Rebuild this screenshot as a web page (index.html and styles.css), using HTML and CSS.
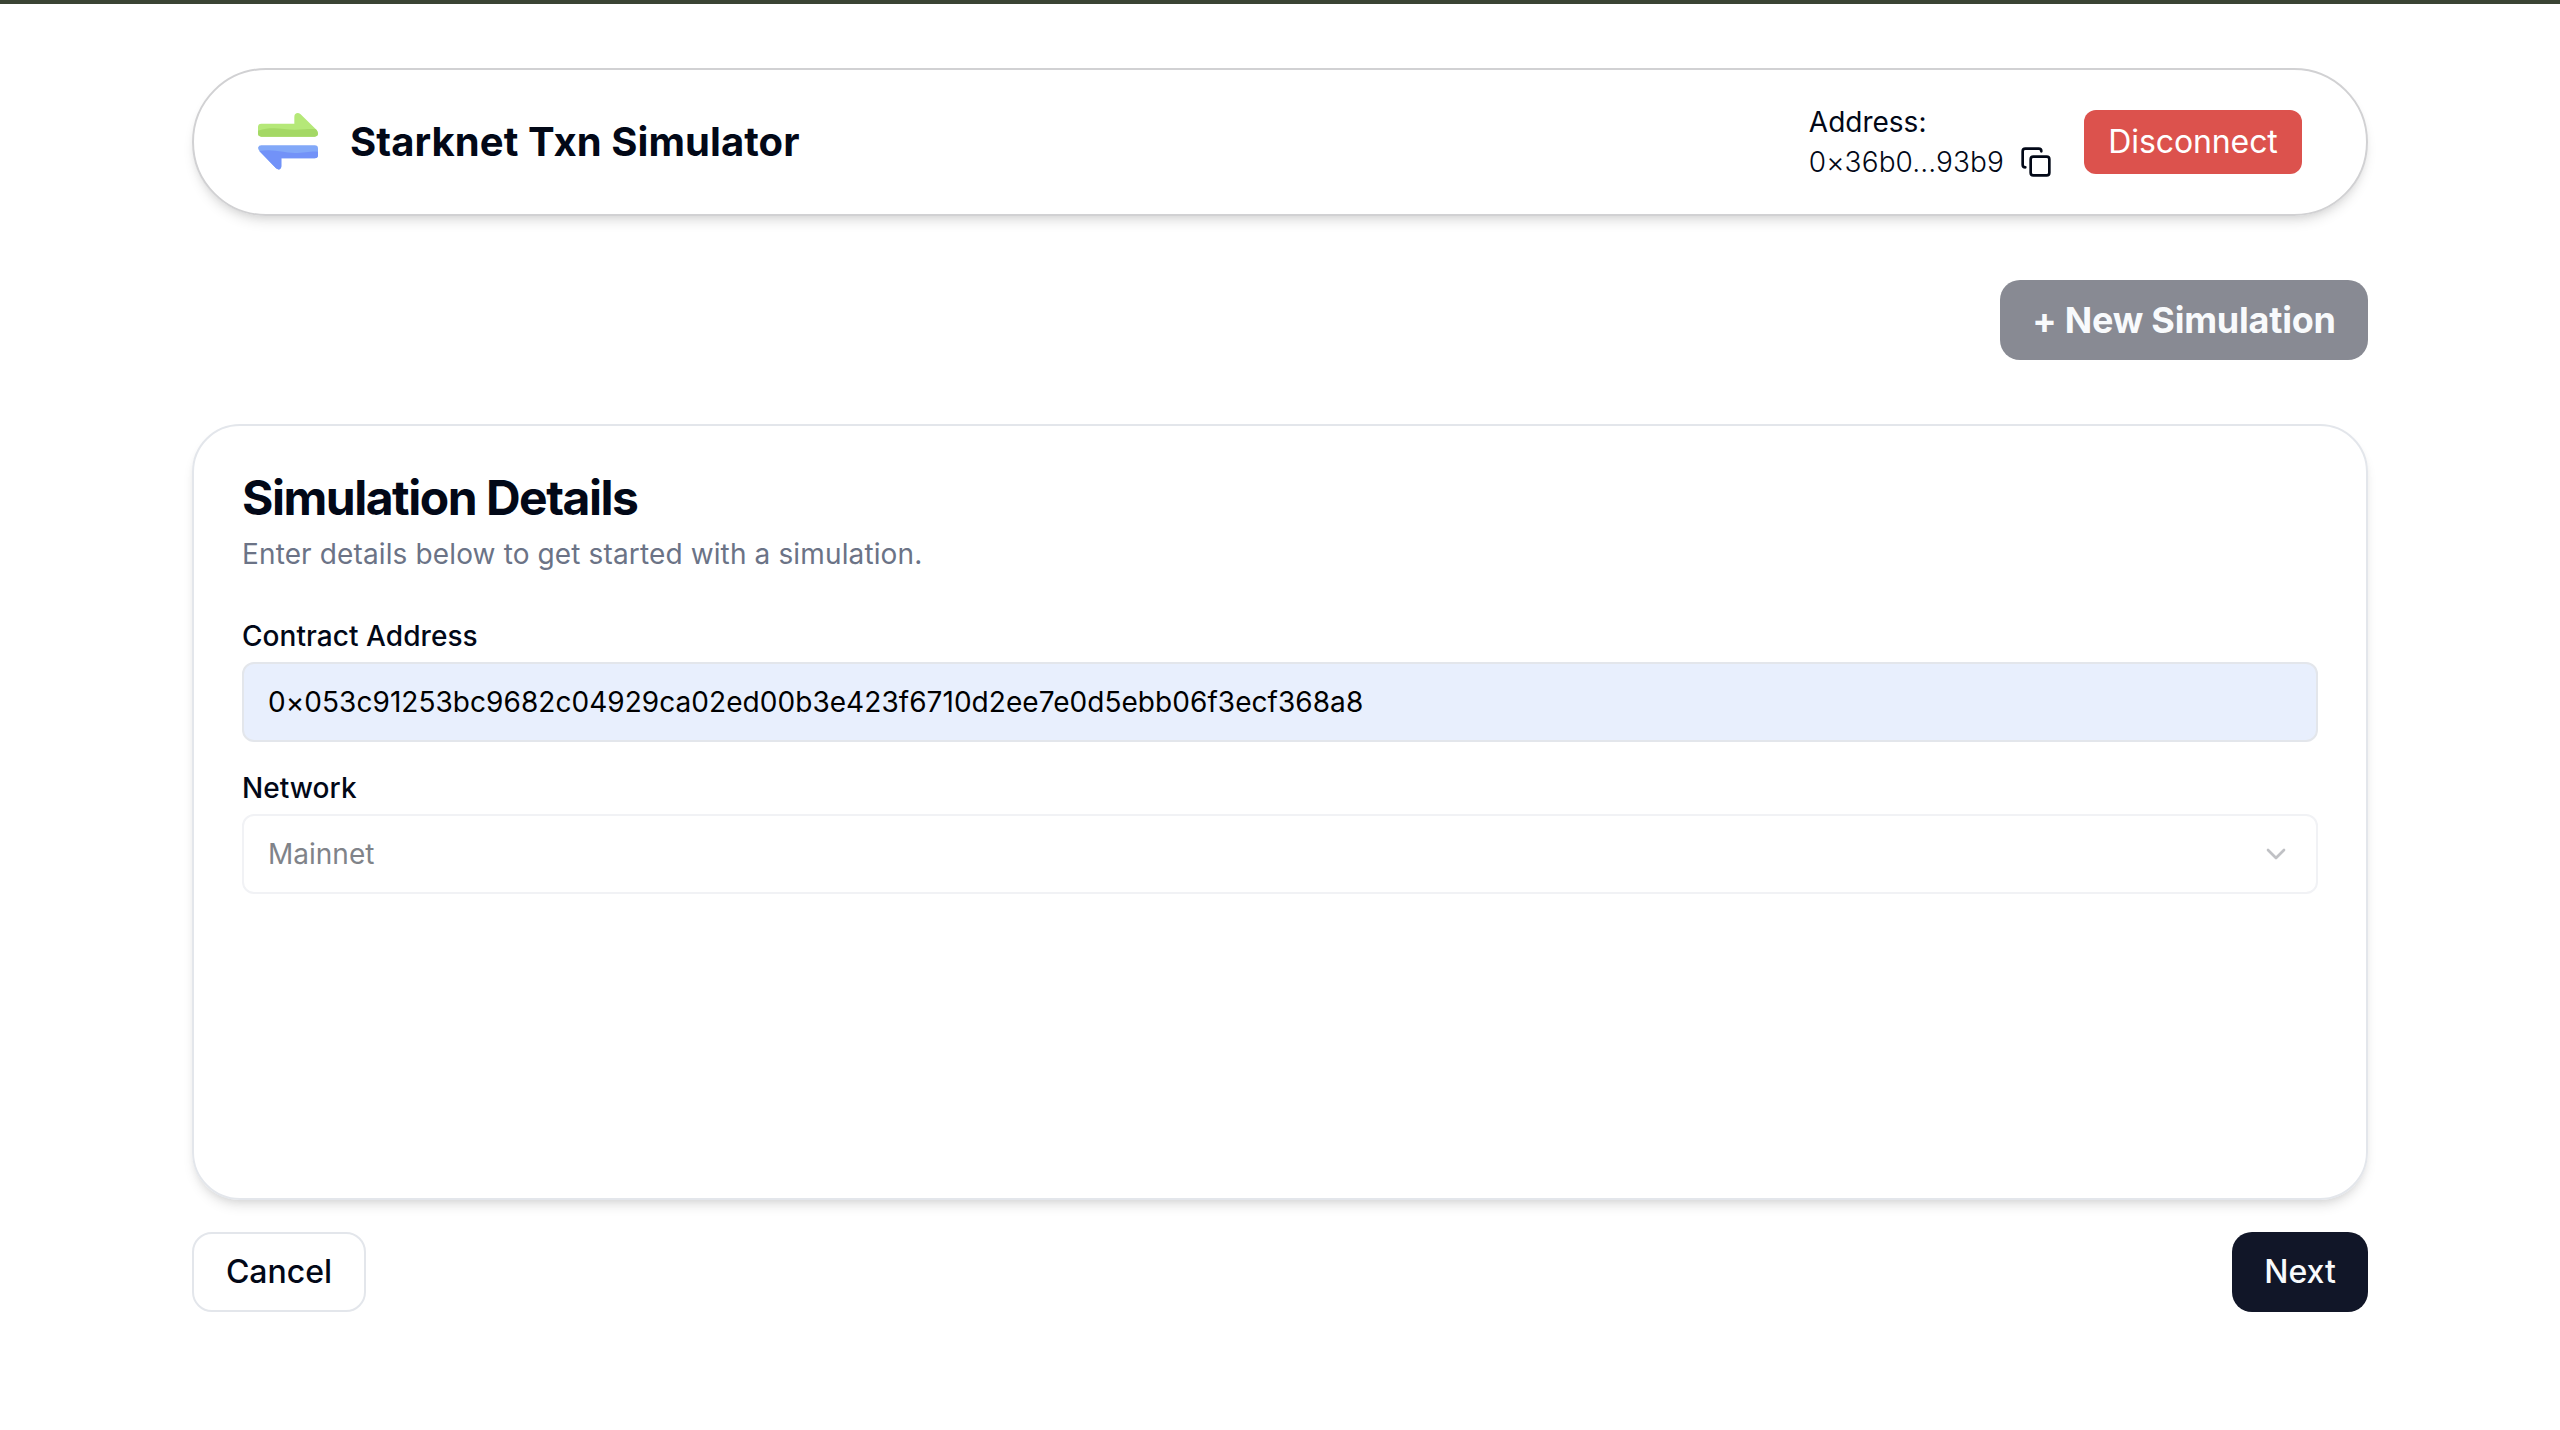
FILE: index.html
```html
<!DOCTYPE html>
<html lang="en">
<head>
<meta charset="utf-8">
<title>Starknet Txn Simulator</title>
<link rel="stylesheet" href="styles.css">
</head>
<body>
<div class="page">
  <header class="header">
    <div class="brand">
      <svg class="logo" viewBox="0 0 180 174">
        <path fill="#b5e878" d="M10 32H109V11C109 1 119-3 127 3L173 48Q180 55 180 61Q180 71 170 71H10Q0 71 0 61V42Q0 32 10 32Z"/>
        <path fill="#a4d865" d="M0 53C45 38 75 50 110 50C140 50 158 46 174 49Q180 56 180 61Q180 71 170 71H10Q0 71 0 61Z"/>
        <path fill="#82a8f8" d="M10 97H170Q180 97 180 107V126Q180 136 170 136H70V160C70 170 61 172 54 166L6 116Q0 109 0 104Q2 97 10 97Z"/>
        <path fill="#7292f8" d="M4 114C45 107 75 119 110 120C140 120 158 114 180 116V126Q180 136 170 136H70V160C70 170 61 172 54 166Z"/>
      </svg>
      <h1 class="brand-name">Starknet Txn Simulator</h1>
    </div>
    <div class="account">
      <div class="address">
        <span class="address-label">Address:</span>
        <div class="address-row">
          <span class="address-value">0×36b0...93b9</span>
          <svg class="copy" viewBox="0 0 24 24"><rect x="8" y="8" width="14" height="14" rx="2"/><path d="M4 16c-1.1 0-2-.9-2-2V4c0-1.1.9-2 2-2h10c1.1 0 2 .9 2 2"/></svg>
        </div>
      </div>
      <button class="disconnect">Disconnect</button>
    </div>
  </header>
  <div class="toolbar"><button class="btn new">+ New Simulation</button></div>
  <main class="card">
    <h2 class="title">Simulation Details</h2>
    <p class="subtitle">Enter details below to get started with a simulation.</p>
    <label class="label" for="contract">Contract Address</label>
    <input class="field input" id="contract" value="0×053c91253bc9682c04929ca02ed00b3e423f6710d2ee7e0d5ebb06f3ecf368a8">
    <span class="label">Network</span>
    <div class="field select">
      <span>Mainnet</span>
      <svg class="chevron" viewBox="0 0 24 24"><path d="m6 9 6 6 6-6"/></svg>
    </div>
  </main>
  <footer class="actions">
    <button class="btn cancel">Cancel</button>
    <button class="btn next">Next</button>
  </footer>
</div>
</body>
</html>
```
FILE: styles.css
```css
* { box-sizing: border-box; margin: 0; }
body {
  min-height: 1430px;
  background: #fff;
  border-top: 4px solid #3a4434;
  color: #020817;
  font-family: Inter, sans-serif;
  font-size: 28px;
  line-height: 40px;
}
button, input { font: inherit; }
button { border: 0; padding: 0; }
.page { width: 2176px; margin: 0 auto; padding-top: 64px; }
.header {
  height: 148px;
  padding: 0 64px 0 62px;
  display: flex;
  align-items: center;
  justify-content: space-between;
  border: 2px solid #d1d1d3;
  border-radius: 74px;
  box-shadow: 0 8px 12px -2px rgb(0 0 0 / .1), 0 4px 8px -4px rgb(0 0 0 / .1);
}
.brand { display: flex; align-items: center; gap: 32px; padding-left: 2px; }
.logo { width: 60px; height: 58px; overflow: visible; }
.brand-name { font-size: 40px; line-height: 56px; font-weight: 700; letter-spacing: 0.08px; }
.account { display: flex; align-items: center; gap: 32px; }
.address { display: flex; flex-direction: column; }
.address-row { display: flex; align-items: center; gap: 16px; }
.address-value { font-weight: 300; letter-spacing: 0.1px; }
.copy { width: 32px; height: 32px; }
.copy, .chevron { fill: none; stroke: currentColor; stroke-width: 2; stroke-linecap: round; stroke-linejoin: round; }
.disconnect {
  width: 218px;
  height: 64px;
  border-radius: 12px;
  background: #dc524d;
  color: #fff;
  font-size: 32px;
  letter-spacing: -0.1px;
}
.toolbar { display: flex; justify-content: flex-end; padding: 64px 0; }
.btn { height: 80px; border-radius: 20px; font-size: 32px; font-weight: 500; }
.new { width: 368px; background: #888a93; color: #f8fafc; font-size: 36px; font-weight: 700; letter-spacing: -0.22px; }
.card {
  height: 776px;
  padding: 48px;
  display: flex;
  flex-direction: column;
  border: 2px solid #e3e6eb;
  border-radius: 48px;
  box-shadow: 0 8px 12px -2px rgb(0 0 0 / .1), 0 4px 8px -4px rgb(0 0 0 / .1);
}
.title { font-size: 48px; line-height: 48px; font-weight: 650; letter-spacing: -0.031em; }
.subtitle { margin: 12px 0 42px; color: #6b7386; letter-spacing: 0.13px; }
.label { margin-bottom: 6px; font-weight: 500; letter-spacing: 0.06px; }
.field {
  width: 100%;
  height: 80px;
  flex: none;
  padding: 0 24px;
  border: 2px solid #e3e6eb;
  border-radius: 12px;
}
.input { margin-bottom: 26px; background: #e8effd; color: #000; letter-spacing: 0.05px; }
.select {
  display: flex;
  align-items: center;
  justify-content: space-between;
  border-color: #f1f2f5;
  color: #808389;
}
.chevron { width: 32px; height: 32px; color: #c0c1c5; }
.actions { display: flex; justify-content: space-between; padding-top: 32px; }
.cancel { width: 174px; border: 2px solid #e3e6eb; background: #fff; color: #020817; }
.next { width: 136px; background: #111628; color: #f8fafc; }
```
